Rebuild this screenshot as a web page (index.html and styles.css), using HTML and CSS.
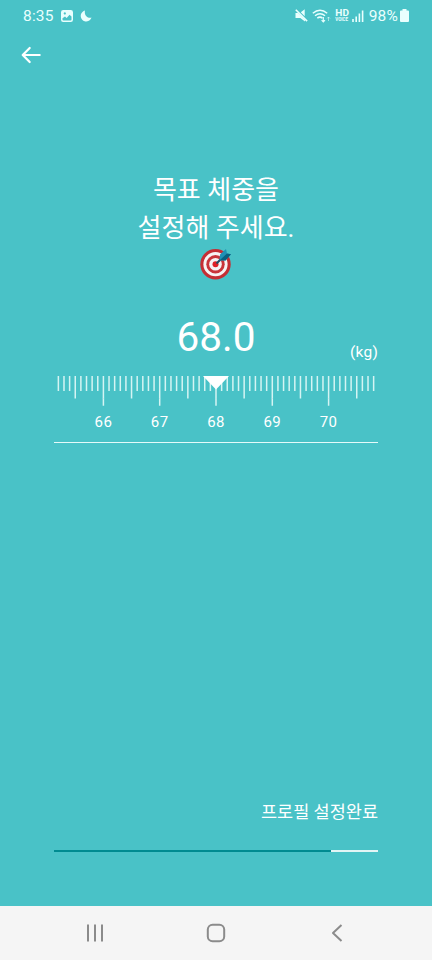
FILE: index.html
```html
<!DOCTYPE html>
<html lang="ko">
<head>
<meta charset="utf-8">
<title>목표 체중</title>
<link rel="stylesheet" href="styles.css">
</head>
<body>
<div class="screen">
  <header class="status">
    <span class="time">8:35</span>
    <svg class="photo" width="12" height="12" viewBox="0 0 12 12"><path fill="currentColor" fill-rule="evenodd" d="M2.2 0h7.6Q12 0 12 2.2v7.6Q12 12 9.800 12H2.200Q0 12 0 9.800V2.200Q0 0 2.200 0ZM1.500 8.300v1.300q0 .9.900.9h7.200q.9 0 .9-.9V6.500L8.500 4.700 5.700 8 4 6.500ZM3.800 2.300a1.100 1.100 0 1 0 .01 0Z"/></svg>
    <svg class="moon" width="12" height="12" viewBox="0 0 12 12"><path fill="currentColor" d="M5 .6A5.500 5.500 0 1 0 11.500 7.600C8 8.800 3.800 5.500 5 .6Z"/></svg>
    <div class="signals">
      <svg width="13" height="13" viewBox="0 0 13 13"><path fill="currentColor" d="M.5 4h2.700L10 10.800V12.500L5.300 9H.5ZM5.800 3.300 9.700.3V7.200Z"/><path stroke="currentColor" stroke-width="1.600" d="m.8.800 11.300 11.300"/></svg>
      <svg class="wifi" width="19" height="14" viewBox="0 0 19 14" fill="none" stroke="currentColor" stroke-width="1.500"><path d="M.8 4.300Q8-1.900 15.200 4.300M3 6.800Q8 2.600 13 6.800M5.300 9.200Q8 7 10.500 9.200"/><path stroke-width="1.200" d="M11.300 8v4.800m-1.700-1.700 1.700 1.700 1.700-1.700"/><path stroke-width=".8" opacity=".7" d="M16.500 12V8m-1.500 1.500L16.500 8 18 9.500"/></svg>
      <div class="hd"><b>HD</b><span>VOICE</span></div>
      <svg class="bars" width="12" height="12" viewBox="0 0 12 12" fill="none" stroke="currentColor" stroke-width="1.600"><path d="M1 12V9M4.200 12V6.500M7.400 12V3.500M10.600 12V.5"/></svg>
      <span class="percent">98%</span>
      <svg class="battery" width="9" height="13" viewBox="0 0 9 13"><path fill="currentColor" d="M2.500 0h4v1.500H8Q9 1.500 9 2.500V12Q9 13 8 13H1Q0 13 0 12V2.500Q0 1.500 1 1.500h1.500Z"/></svg>
    </div>
  </header>
  <nav class="top">
    <svg width="20" height="18" viewBox="0 0 20 18" fill="none" stroke="currentColor" stroke-width="2.200" stroke-linecap="round" stroke-linejoin="round"><path d="M18.700 9H2M8.700 2 1.700 9l7 7"/></svg>
  </nav>
  <main class="content">
    <h1 class="title">목표 체중을<br>설정해 주세요.</h1>
    <svg class="target" width="32" height="32" viewBox="0 0 32 32">
      <circle cx="15.500" cy="16.200" r="15.200" fill="#c52e34"/>
      <circle cx="15.500" cy="16.200" r="12.100" fill="#f7f3f4"/>
      <circle cx="15.500" cy="16.200" r="9.200" fill="#c9343a"/>
      <circle cx="15.500" cy="16.200" r="6.300" fill="#f7f3f4"/>
      <circle cx="15.500" cy="16.200" r="3" fill="#df2026"/>
      <path d="m16.500 15.500 7.500-7.500" stroke="#214e65" stroke-width="2.200"/>
      <path d="m19.500 12.500.5-6L26 1l1 4.500 4 .7-5.500 6.200Z" fill="#1f91b5"/>
      <path d="m20 12 7-6.500 4 .7-5.500 6.200Z" fill="#086181"/>
    </svg>
    <div class="reading"><span class="value">68.0</span><span class="unit">(kg)</span></div>
    <div class="ruler">
      <svg width="324" height="30" viewBox="0 0 324 30" fill="none">
        <g stroke="#d5f4f3">
          <path stroke-width="15" stroke-dasharray="1.500 4.130" d="M3.610 7.500H320.500"/>
          <path stroke-width="7.500" stroke-dasharray="1.500 26.650" d="M20.500 18.700H304"/>
          <path stroke-width="7.500" stroke-dasharray="1.500 54.800" d="M48.650 26H276"/>
        </g>
        <path fill="#fff" d="M149 0h26L162 13.500Z"/>
      </svg>
      <div class="labels"><span>66</span><span>67</span><span>68</span><span>69</span><span>70</span></div>
    </div>
  </main>
  <footer class="finish">
    <div class="done">프로필 설정완료</div>
    <div class="progress"><div class="fill"></div></div>
  </footer>
  <nav class="system">
    <svg width="18" height="18" viewBox="0 0 18 18" fill="none"><path stroke-width="2" d="M2 .5v17M9 .5v17M16 .5v17"/></svg>
    <svg width="20" height="20" viewBox="0 0 20 20" fill="none"><rect x="1.800" y="1.800" width="16.400" height="16.400" rx="4.800" stroke-width="2"/></svg>
    <svg width="18" height="18" viewBox="0 0 18 18" fill="none"><path stroke-width="2" stroke-linejoin="round" d="M13.500 1 5 9l8.500 8"/></svg>
  </nav>
</div>
</body>
</html>
```
FILE: styles.css
```css
* { box-sizing: border-box; }
body { margin: 0; font-family: Roboto, "Noto Sans CJK KR", sans-serif; }
svg { display: block; flex: none; }
.screen { width: 432px; height: 960px; display: flex; flex-direction: column; background: #49c2c7; color: #fff; }
.status { height: 31px; display: flex; align-items: center; padding: 0 23px; color: #e9fffe; font-size: 15.500px; letter-spacing: .2px; }
.time { width: 31px; white-space: nowrap; }
.photo { margin-left: 7px; }
.moon { margin-left: 7px; }
.signals { display: flex; align-items: center; margin-left: auto; }
.wifi { margin-left: 4px; }
.hd { width: 14px; margin-left: 4px; display: flex; flex-direction: column; align-items: center; letter-spacing: 0; }
.hd b { font-size: 9px; line-height: 8px; transform: scaleX(1.120); }
.hd span { font-size: 4.500px; line-height: 5px; font-weight: 700; }
.bars { margin-left: 3px; }
.percent { margin-left: 5px; }
.battery { margin-left: 2px; }
.top { height: 47px; display: flex; align-items: center; padding-left: 21px; }
.content { flex: 1; display: flex; flex-direction: column; align-items: center; padding: 94px 54px 0; }
.title { margin: 0; font: 400 26px/37.500px Roboto, "Noto Sans CJK KR", sans-serif; text-align: center; }
.target { margin-top: 1px; }
.reading { width: 324px; height: 96px; display: grid; grid-template-columns: 1fr auto 1fr; align-items: end; padding-bottom: 13px; }
.value { grid-column: 2; font-size: 40.500px; line-height: 51px; }
.unit { justify-self: end; font-size: 15.500px; line-height: 21px; letter-spacing: .2px; }
.ruler { width: 324px; height: 67px; border-bottom: 1px solid #e5fafa; }
.labels { display: grid; grid-template-columns: repeat(5, 56.300px); justify-content: center; margin-top: 6px; text-align: center; font-size: 15px; line-height: 20px; letter-spacing: .4px; }
.finish { padding: 0 54px 54px; }
.done { text-align: right; font-size: 17.500px; line-height: 26px; margin-bottom: 25px; }
.progress { height: 2.500px; background: #e2f5f5; }
.fill { width: 277px; height: 2.500px; background: #008b91; }
.system { height: 54px; display: flex; justify-content: space-between; align-items: center; padding: 0 86px; background: #f5f5f5; stroke: #8b8b8b; }
```
